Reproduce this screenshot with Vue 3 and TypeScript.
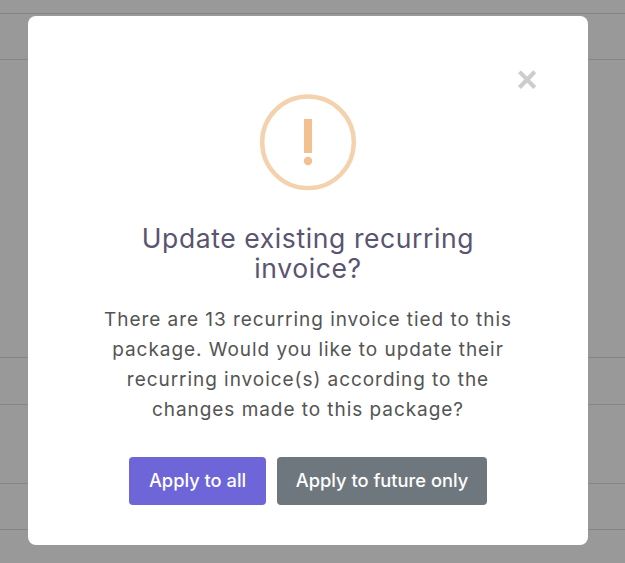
<script setup lang="ts">
const rowHeights: number[] = [14, 46, 298, 47, 79, 46]
</script>

<template>
  <div class="page">
    <div class="rows">
      <div v-for="(h, i) in rowHeights" :key="i" class="row" :style="{ height: h + 'px' }"></div>
    </div>
    <div class="overlay">
      <div class="modal" role="dialog">
        <button class="close" aria-label="Close">×</button>
        <div class="icon">
          <svg width="96" height="96" viewBox="0 0 96 96" aria-hidden="true">
            <circle cx="48" cy="47.3" r="45.8" fill="none" stroke="#f4d2ae" stroke-width="4.4" />
            <rect x="44" y="24" width="8" height="34" fill="#f3c08f" />
            <circle cx="48" cy="66" r="4.2" fill="#f3c08f" />
          </svg>
        </div>
        <h2 class="title">Update existing recurring invoice?</h2>
        <p class="text">There are 13 recurring invoice tied to this package. Would you like to update their recurring invoice(s) according to the changes made to this package?</p>
        <div class="actions">
          <button class="btn primary">Apply to all</button>
          <button class="btn secondary">Apply to future only</button>
        </div>
      </div>
    </div>
  </div>
</template>

<style>
html, body { margin: 0; height: 100%; overflow: hidden; }
</style>

<style scoped>
.page {
  position: relative;
  width: 625px;
  height: 563px;
  overflow: hidden;
  background: #999999;
  font-family: "Inter", "Open Sans", sans-serif;
}
.row {
  box-sizing: border-box;
  border-bottom: 1px solid #858585;
}
.overlay {
  position: absolute;
  inset: 0;
  display: flex;
  justify-content: flex-start;
  align-items: flex-start;
  padding: 16px 0 0 28px;
  box-sizing: border-box;
}
.modal {
  position: relative;
  box-sizing: border-box;
  width: 560px;
  height: 529px;
  background: #fff;
  border-radius: 8px;
  padding: 79px 64px 0;
  display: flex;
  flex-direction: column;
  align-items: center;
}
.close {
  position: absolute;
  top: 44px;
  right: 43px;
  width: 36px;
  height: 40px;
  padding: 0;
  border: 0;
  background: none;
  color: #cccccc;
  font: 700 36px/40px "Liberation Sans", sans-serif;
  text-align: center;
}
.icon { height: 96px; width: 96px; }
.icon svg { display: block; overflow: visible; }
.title {
  margin: 32px 0 0;
  width: 372px;
  font-size: 26.5px;
  line-height: 30px;
  font-weight: 400;
  letter-spacing: 0.6px;
  color: #595470;
  text-align: center;
}
.text {
  margin: 22px 0 0;
  width: 412px;
  font-size: 19px;
  line-height: 30px;
  font-weight: 400;
  letter-spacing: 0.95px;
  color: #545454;
  text-align: center;
}
.actions {
  margin-top: 32px;
  display: flex;
  gap: 11px;
}
.btn {
  height: 48px;
  border: 0;
  border-radius: 4px;
  color: #fff;
  font-family: inherit;
  font-size: 18.3px;
  font-weight: 500;
  padding: 0 0 2px;
}
.primary { width: 137px; background: #6e65d8; }
.secondary { width: 210px; background: #6f777e; }
</style>
